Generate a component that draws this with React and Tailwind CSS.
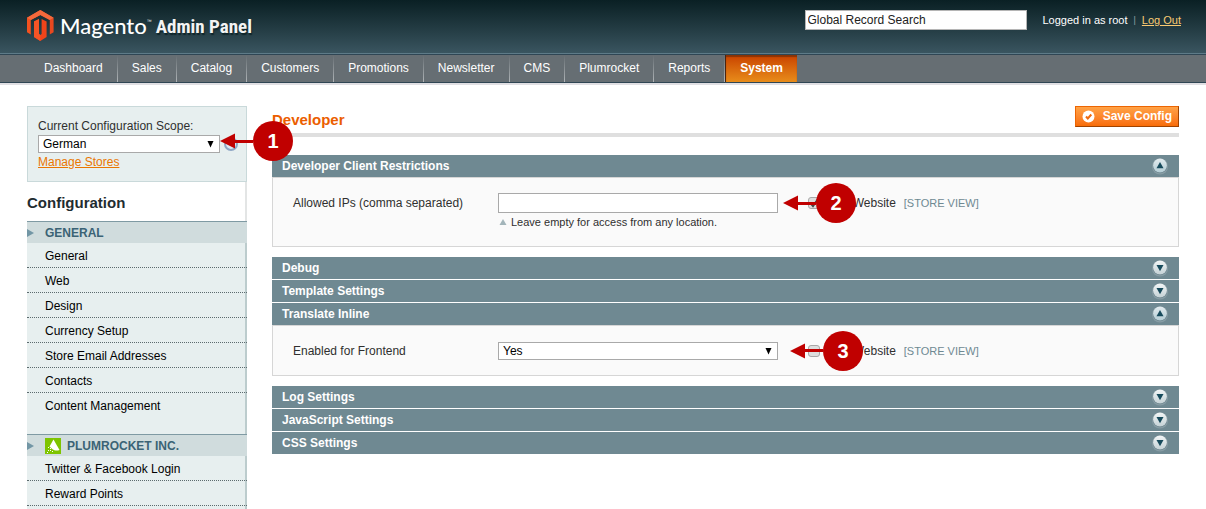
import React from "react";

const NAV = ["Dashboard", "Sales", "Catalog", "Customers", "Promotions", "Newsletter", "CMS", "Plumrocket", "Reports", "System"];

const GENERAL = ["General", "Web", "Design", "Currency Setup", "Store Email Addresses", "Contacts", "Content Management"];

const PLUMROCKET = ["Twitter & Facebook Login", "Reward Points"];

function MagentoMark() {
  return (
    <svg viewBox="0 0 27 31" className="h-[31px] w-[27px]" aria-hidden="true">
      <path d="M0 7.700 13.300 0v5L3.800 10v14.400L0 22.300z" fill="#f4511f" />
      <path d="M26.600 7.700 13.300 0v5l9.500 5v14.400l3.800-2.100z" fill="#e8481f" />
      <path d="M0 7.700 13.300 0l13.300 7.700-3.800 2.300-9.500-5-9.500 5z" fill="#f4693c" />
      <path d="M7 11.400 12 9v15l1.300 1 1.300-1V9l5 2.400v15.700L13.300 31 7 27.100z" fill="#f0441a" />
      <path d="M7 11.400 12 9v15l1.300 1v6L7 27.100z" fill="#f65426" />
    </svg>
  );
}

function Callout({ number, className, shaft }) {
  return (
    <div className={`pointer-events-none absolute z-10 flex items-center ${className}`}>
      <svg viewBox="0 0 16 16" className="h-4 w-4 shrink-0" aria-hidden="true">
        <path d="M0 8 15 .5v15z" fill="#c00000" />
      </svg>
      <span className={`-ml-1 h-[3px] bg-[#c00000] ${shaft}`} />
      <span className="flex h-10 w-10 shrink-0 items-center justify-center rounded-full bg-[#c00000] text-xl font-bold text-white">
        {number}
      </span>
    </div>
  );
}

function SelectBox({ id, value, options, className }) {
  return (
    <div className={`relative ${className}`}>
      <select
        id={id}
        defaultValue={value}
        className="block h-[18px] w-full appearance-none rounded-none border border-[#a9a9a9] bg-white px-1 text-xs leading-4 text-black"
      >
        {options.map((option) => (
          <option key={option}>{option}</option>
        ))}
      </select>
      <svg viewBox="0 0 7 7" className="pointer-events-none absolute top-[6px] right-[6px] h-[7px] w-[7px]" aria-hidden="true">
        <path d="M.5 0h6L3.500 6.500z" fill="#000" />
      </svg>
    </div>
  );
}

function MenuGroup({ title, icon, items }) {
  return (
    <section>
      <h4 className="-mr-[2px] flex h-[22px] items-center border-t border-[#7f9aa3] bg-[#d0dcdd] font-bold text-[#3b6375] uppercase">
        <svg viewBox="0 0 7 8" className="mr-[11px] h-2 w-[7px]" aria-hidden="true">
          <path d="M0 0 7 4 0 8z" fill="#7296a5" />
        </svg>
        {icon}
        {title}
      </h4>
      <ul className="-mr-[2px]">
        {items.map((item) => (
          <li key={item} className="h-[25px] border-b border-dotted border-[#5c6b6e] last:group-first:border-transparent">
            <a href="#" className="block pt-[5px] pl-[18px] leading-4 text-black">
              {item}
            </a>
          </li>
        ))}
      </ul>
    </section>
  );
}

function Toggle({ open }) {
  return (
    <svg viewBox="0 0 18 18" className="h-[18px] w-[18px]" aria-hidden="true">
      <defs>
        <linearGradient id={open ? "knob-up" : "knob-down"} x1="0" y1="0" x2="0" y2="1">
          <stop offset="0" stopColor={open ? "#e2ebee" : "#f1f5f6"} />
          <stop offset="1" stopColor={open ? "#b4cdd5" : "#c5d2d6"} />
        </linearGradient>
      </defs>
      <circle cx="9" cy="9.500" r="8" fill="#869ca4" />
      <circle cx="9" cy="9" r="7.200" fill="#67808a" />
      <circle cx="9" cy="8.500" r="6.900" fill={open ? "url(#knob-up)" : "url(#knob-down)"} />
      <path d={open ? "M9 5 12.500 11.300H5.500z" : "M5.500 6h7L9 12.300z"} fill="#174b5c" />
    </svg>
  );
}

function Section({ title, children }) {
  const open = Boolean(children);
  return (
    <section>
      <h4>
        <button
          type="button"
          aria-expanded={open}
          className="flex h-[22px] w-full items-center justify-between bg-[#6f8992] px-[10px] text-left font-bold text-white"
        >
          {title}
          <Toggle open={open} />
        </button>
      </h4>
      {open && <div className="mb-[9px] border border-[#d6d6d6] bg-[#fafafa] pl-5 text-[#2f2f2f]">{children}</div>}
    </section>
  );
}

function UseWebsite({ id, checked }) {
  return (
    <span className="ml-[30px] flex h-5 items-center">
      <span className="relative h-3 w-3">
        <input
          id={id}
          type="checkbox"
          defaultChecked={checked}
          className="block h-3 w-3 appearance-none rounded-[3px] border border-[#a8a8a8] bg-[#dedede]"
        />
        {checked && (
          <svg viewBox="0 0 12 12" className="pointer-events-none absolute inset-0 h-3 w-3" aria-hidden="true">
            <path d="M2.500 6 5 9l5-7" fill="none" stroke="#444" strokeWidth="2" />
          </svg>
        )}
      </span>
      <label htmlFor={id} className="ml-2">
        Use Website
      </label>
    </span>
  );
}

export default function App() {
  return (
    <div className="flex min-h-screen flex-col bg-white font-['Liberation_Sans',Arial,sans-serif] text-xs text-[#2f2f2f]">
      <header>
        <div className="flex h-[53px] items-start justify-between bg-linear-to-b from-[#0a2024] to-[#3a5560] pr-[25px] pl-[27px]">
          <a href="#" className="flex pt-[10px] text-white" aria-label="Magento Admin Panel">
            <MagentoMark />
            <span className="ml-[6px] font-[Lato,sans-serif] text-[22px] leading-8 font-medium">Magento</span>
            <span className="pt-2 text-[5px] leading-[6px]">™</span>
            <span className="ml-1 font-['Roboto_Condensed','Open_Sans_Condensed','Noto_Sans_Condensed',Lato,sans-serif] text-[19px] leading-[34px] font-bold text-[#f3f3f3] [text-shadow:1px_2px_1px_#10262b]">
              Admin Panel
            </span>
          </a>
          <div className="flex items-center pt-[10px] text-[11px] text-white">
            <input
              type="text"
              aria-label="Global Record Search"
              defaultValue="Global Record Search"
              className="h-5 w-[222px] border border-[#b5b5b5] bg-white px-[2px] text-xs text-[#222]"
            />
            <span className="ml-4">Logged in as root</span>
            <span className="mx-[6px] text-[9px] text-[#8fa0a5]">|</span>
            <a href="#" className="text-[#f9ca72] underline">
              Log Out
            </a>
          </div>
        </div>
        <nav className="flex h-[30px] border-t border-b border-t-[#5e7b88] border-b-[#2f4654] bg-[#666e73] shadow-[0_2px_0_#e0dfe3]">
          <ul className="flex grow border-t border-[#2f4654] pl-[30px]">
            {NAV.map((item) => (
              <li key={item} className="flex">
                {item === "System" ? (
                  <a
                    href="#"
                    aria-current="page"
                    className="flex items-center border-l border-[#4a2410] bg-linear-to-b from-[#c84000] to-[#e88c1a] px-[14px] pb-[2px] font-bold text-white shadow-[inset_0_2px_1px_#8a3305]"
                  >
                    {item}
                  </a>
                ) : (
                  <a href="#" className="flex items-center px-[14px] pb-[2px] text-white">
                    {item}
                  </a>
                )}
                {item !== "System" && <span className="w-px bg-linear-to-b from-[#666e73] to-[#b0b5b8]" />}
              </li>
            ))}
          </ul>
        </nav>
      </header>

      <div className="flex grow px-[27px]">
        <aside className="flex w-[220px] shrink-0 flex-col pt-[23px]">
          <div className="h-[76px] border border-[#c9d9da] bg-[#e7efef] px-[10px] pt-[11px]">
            <label htmlFor="scope" className="block leading-4">
              Current Configuration Scope:
            </label>
            <div className="relative mt-px flex items-center">
              <SelectBox id="scope" value="German" options={["Default Config", "German"]} className="w-[182px] shrink-0" />
              <span className="ml-1 h-[14px] w-[14px] shrink-0 rounded-full border-2 border-[#8fa6c4] bg-[#dfe8f3]" />
              <Callout number="1" className="-top-[14px] left-[182px]" shaft="w-[21px]" />
            </div>
            <a href="#" className="block leading-[18px] text-[#ea7601] underline">
              Manage Stores
            </a>
          </div>
          <h3 className="h-[39px] border-r-2 border-[#e3e5e5] pt-[11px] text-[15px] leading-5 font-bold text-[#1f2c30]">Configuration</h3>
          <div className="flex grow flex-col gap-4 border-r-2 border-[#bccccd] bg-[#e7efef]">
            <div className="group">
              <MenuGroup title="General" items={GENERAL} />
            </div>
            <MenuGroup
              title="Plumrocket Inc."
              items={PLUMROCKET}
              icon={
                <svg viewBox="0 0 16 16" className="mr-[6px] h-4 w-4" aria-hidden="true">
                  <path d="M0 0h16v16H0z" fill="#7ec400" />
                  <path d="M8.500 1.500 14.500 12c-2.500 1-5 .8-7-.8L4.500 8.500z" fill="#fff" />
                  <path d="M3 9h1v1H3zM5 10h1v1H5zM3 12h1v1H3zM5 12h1v1H5zM7 13h1v1H7zM2 14h1v1H2z" fill="#fff" />
                </svg>
              }
            />
          </div>
        </aside>

        <main className="ml-[25px] min-w-0 grow pt-[23px]">
          <div className="flex h-[31px] items-start justify-between border-b-4 border-[#dfdfdf]">
            <h3 className="pt-1 text-[15px] leading-5 font-bold text-[#eb5e00]">Developer</h3>
            <button
              type="button"
              className="flex h-[21px] items-center border border-t-[#ed6502] border-r-[#a04300] border-b-[#a04300] border-l-[#ed6502] bg-linear-to-b from-[#ffa245] to-[#f86c05] px-[6px] pb-px font-bold text-white"
            >
              <svg viewBox="0 0 13 13" className="mr-2 h-[13px] w-[13px]" aria-hidden="true">
                <circle cx="6.500" cy="6.500" r="6" fill="#fff" />
                <path d="M4 6.500 5.800 8.500 9.300 4.500" fill="none" stroke="#ee6a10" strokeWidth="2" />
              </svg>
              Save Config
            </button>
          </div>

          <div className="mt-[18px] flex flex-col gap-px">
            <Section title="Developer Client Restrictions">
              <div className="flex h-[68px] items-start pt-[15px]">
                <label htmlFor="ips" className="w-[205px] leading-5">
                  Allowed IPs (comma separated)
                </label>
                <div className="relative w-[280px]">
                  <input id="ips" type="text" className="block h-5 w-full border border-[#a9a9a9] bg-white px-1" />
                  <p className="flex items-center pl-px text-[11px] leading-[18px]">
                    <svg viewBox="0 0 8 6" className="mr-1 h-[6px] w-2" aria-hidden="true">
                      <path d="M4 0 7.500 6H.5z" fill="#a3b5ba" />
                    </svg>
                    Leave empty for access from any location.
                  </p>
                  <Callout number="2" className="-top-[10px] left-[285px]" shaft="w-[21px]" />
                </div>
                <UseWebsite id="ips-inherit" checked />
                <span className="ml-2 text-[11px] leading-5 text-[#6f8992]">[STORE VIEW]</span>
              </div>
            </Section>
            <Section title="Debug" />
            <Section title="Template Settings" />
            <Section title="Translate Inline">
              <div className="flex h-[49px] items-center">
                <label htmlFor="frontend" className="w-[205px]">
                  Enabled for Frontend
                </label>
                <div className="relative w-[280px]">
                  <SelectBox id="frontend" value="Yes" options={["Yes", "No"]} className="w-full" />
                  <Callout number="3" className="-top-[11px] left-[292px]" shaft="w-[21px]" />
                </div>
                <UseWebsite id="frontend-inherit" />
                <span className="ml-2 text-[11px] leading-5 text-[#6f8992]">[STORE VIEW]</span>
              </div>
            </Section>
            <Section title="Log Settings" />
            <Section title="JavaScript Settings" />
            <Section title="CSS Settings" />
          </div>
        </main>
      </div>
    </div>
  );
}
